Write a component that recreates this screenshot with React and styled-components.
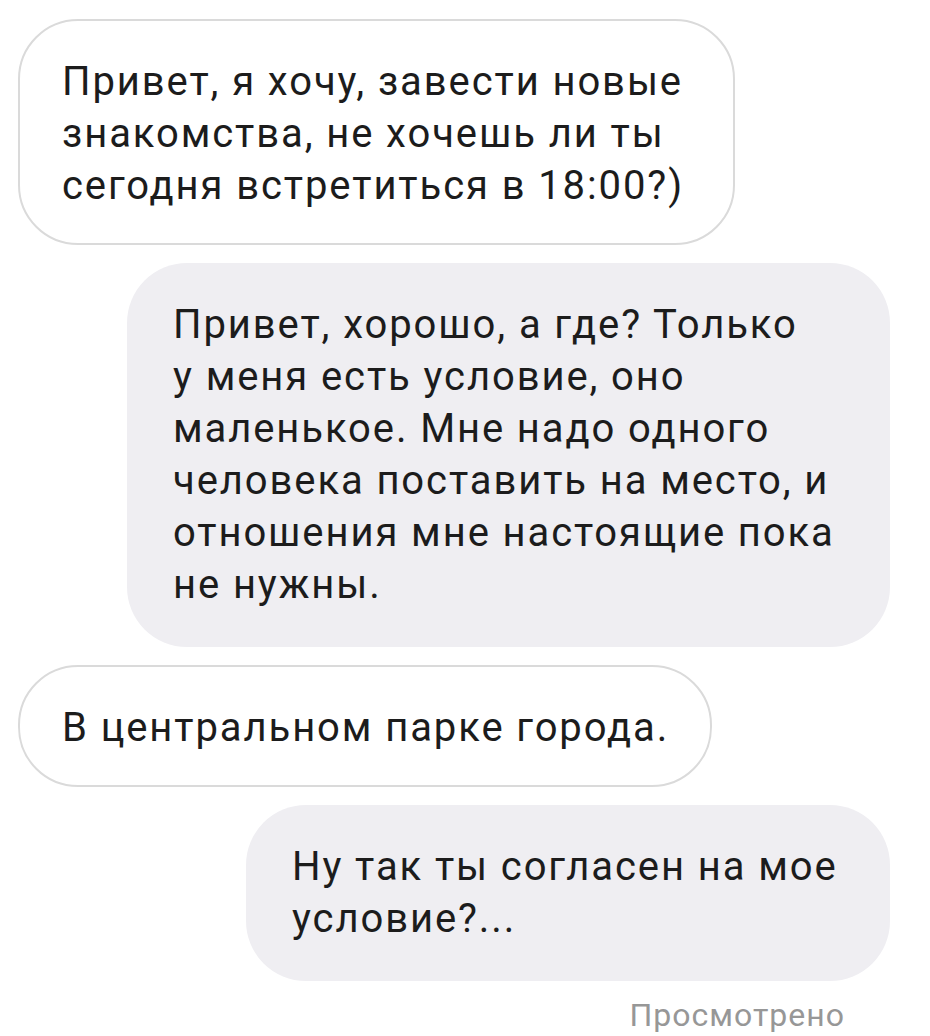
import React from 'react';
import styled, { createGlobalStyle } from 'styled-components';

const GlobalStyle = createGlobalStyle`
  html, body {
    margin: 0;
    padding: 0;
    background: #ffffff;
  }
  body {
    font-family: Roboto, "Noto Sans", "Liberation Sans", sans-serif;
    -webkit-font-smoothing: antialiased;
  }
`;

const Thread = styled.div`
  width: 930px;
  height: 1036px;
  box-sizing: border-box;
  padding: 19px 40px 0 18px;
  display: flex;
  flex-direction: column;
  gap: 18px;
`;

// incoming messages are outlined, outgoing ones are filled grey
const Bubble = styled.div`
  box-sizing: border-box;
  width: ${({ $width }) => $width}px;
  align-self: ${({ $mine }) => ($mine ? 'flex-end' : 'flex-start')};
  padding: ${({ $mine }) => ($mine ? '36px 30px 36px 46px' : '35px 30px 31px 42px')};
  border-radius: 60px;
  background: ${({ $mine }) => ($mine ? '#efeef2' : '#ffffff')};
  border: ${({ $mine }) => ($mine ? 'none' : '2px solid #dadada')};
  color: #1c1c1c;
  font-size: 40px;
  line-height: 52px;
  letter-spacing: 1.9px;
  white-space: pre-line;
`;

const Seen = styled.div`
  align-self: flex-end;
  margin-right: 45px;
  margin-top: -2px;
  color: #979797;
  font-size: 32px;
  line-height: 36px;
  letter-spacing: 1px;
`;

const messages = [
  { mine: false, width: 717, text: 'Привет, я хочу, завести новые\nзнакомства, не хочешь ли ты\nсегодня встретиться в 18:00?)' },
  { mine: true, width: 763, text: 'Привет, хорошо, а где? Только\nу меня есть условие, оно\nмаленькое. Мне надо одного\nчеловека поставить на место, и\nотношения мне настоящие пока\nне нужны.' },
  { mine: false, width: 694, text: 'В центральном парке города.' },
  { mine: true, width: 644, text: 'Ну так ты согласен на мое\nусловие?...' },
];

const App = () => (
  <>
    <GlobalStyle />
    <Thread>
      {messages.map((m, i) => (
        <Bubble key={i} $mine={m.mine} $width={m.width}>
          {m.text}
        </Bubble>
      ))}
      <Seen>Просмотрено</Seen>
    </Thread>
  </>
);

export default App;
